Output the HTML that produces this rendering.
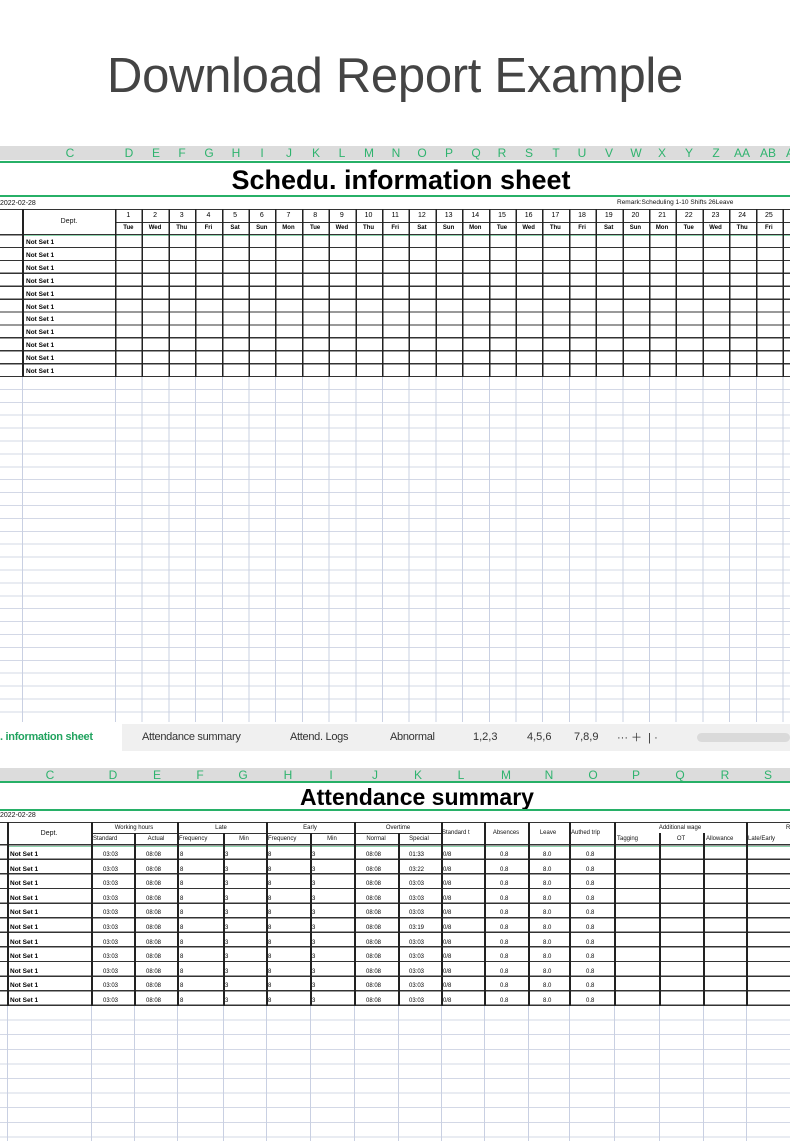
<!DOCTYPE html>
<html><head><meta charset="utf-8"><style>
*{margin:0;padding:0;box-sizing:border-box}
body{width:790px;height:1141px;background:#fff;position:relative;overflow:hidden;font-family:"Liberation Sans",sans-serif}
.a{position:absolute}
.h1{left:0;width:790px;top:48px;text-align:center;font-size:49px;color:#444;letter-spacing:-0.3px}
.colbar{background:#dcdcdc;height:14px}
.colbar span{position:absolute;top:0;font-size:12px;line-height:14px;color:#2fb36e;transform:translateX(-50%)}
.gl{height:2px;background:#27b067;left:0;width:790px}
.t{font-size:7px;line-height:1;color:#111;white-space:nowrap}
.c{transform:translateX(-50%)}
.vl{position:absolute;width:1.5px;background:#222}
.vlg{position:absolute;width:1px;background:#c9d0e2}
</style></head><body>
<div class="a h1">Download Report Example</div>

<!-- SHEET 1 -->
<div class="a colbar" style="left:0;top:146px;width:790px">
<span style="left:70px">C</span><span style="left:129px">D</span><span style="left:156px">E</span><span style="left:182px">F</span><span style="left:209px">G</span><span style="left:236px">H</span><span style="left:262px">I</span><span style="left:289px">J</span><span style="left:316px">K</span><span style="left:342px">L</span><span style="left:369px">M</span><span style="left:396px">N</span><span style="left:422px">O</span><span style="left:449px">P</span><span style="left:476px">Q</span><span style="left:502px">R</span><span style="left:529px">S</span><span style="left:556px">T</span><span style="left:582px">U</span><span style="left:609px">V</span><span style="left:636px">W</span><span style="left:662px">X</span><span style="left:689px">Y</span><span style="left:716px">Z</span><span style="left:742px">AA</span><span style="left:768px">AB</span><span style="left:790px">A</span>
</div>
<div class="a gl" style="top:161px"></div>
<div class="a" style="left:6px;width:790px;top:165px;text-align:center;font-size:27px;font-weight:bold;color:#000">Schedu. information sheet</div>
<div class="a gl" style="top:195px"></div>
<div class="a t" style="left:0;top:200px">2022-02-28</div>
<div class="a t" style="left:617px;top:200px;font-size:6.5px">Remark:Scheduling 1-10 Shifts 26Leave</div>
<div class="a" style="left:0;top:209px;width:790px;height:168px;
background:repeating-linear-gradient(to bottom,#333 0 1.3px,transparent 1.3px 12.9px);background-position:0 25px;background-size:790px 143px;background-repeat:no-repeat"></div>
<div class="a" style="left:0;top:233.5px;width:790px;height:1.5px;background:#333"></div>
<div class="a" style="left:0;top:375.5px;width:790px;height:1.5px;background:#333"></div>
<div class="a" style="left:0;top:209px;width:790px;height:1.3px;background:#333"></div>
<div class="a" style="left:115px;top:221.5px;width:675px;height:1.2px;background:#333"></div>
<div class="a" style="left:23px;top:235px;width:767px;height:1px;background:#8fd3ad"></div>
<div class="a" style="left:115px;top:209px;width:675px;height:168px;background:repeating-linear-gradient(to right,#222 0 1.5px,transparent 1.5px 26.7px)"></div>
<div class="vl" style="left:22px;top:209px;height:168px"></div>
<div class="a" style="left:0;top:377px;width:790px;height:345px;background:repeating-linear-gradient(to bottom,transparent 0 11.9px,#d3d8e6 11.9px 12.9px)"></div>
<div class="a" style="left:115px;top:377px;width:675px;height:345px;background:repeating-linear-gradient(to right,#c9d0e2 0 1px,transparent 1px 26.7px)"></div>
<div class="vlg" style="left:22px;top:377px;height:345px"></div>
<div class="a t c" style="left:69px;top:218px">Dept.</div>
<div class="a" style="left:115px;top:212px;width:675px;font-size:7px;display:flex">
<span style="width:26.7px;text-align:center;flex:none">1</span><span style="width:26.7px;text-align:center;flex:none">2</span><span style="width:26.7px;text-align:center;flex:none">3</span><span style="width:26.7px;text-align:center;flex:none">4</span><span style="width:26.7px;text-align:center;flex:none">5</span><span style="width:26.7px;text-align:center;flex:none">6</span><span style="width:26.7px;text-align:center;flex:none">7</span><span style="width:26.7px;text-align:center;flex:none">8</span><span style="width:26.7px;text-align:center;flex:none">9</span><span style="width:26.7px;text-align:center;flex:none">10</span><span style="width:26.7px;text-align:center;flex:none">11</span><span style="width:26.7px;text-align:center;flex:none">12</span><span style="width:26.7px;text-align:center;flex:none">13</span><span style="width:26.7px;text-align:center;flex:none">14</span><span style="width:26.7px;text-align:center;flex:none">15</span><span style="width:26.7px;text-align:center;flex:none">16</span><span style="width:26.7px;text-align:center;flex:none">17</span><span style="width:26.7px;text-align:center;flex:none">18</span><span style="width:26.7px;text-align:center;flex:none">19</span><span style="width:26.7px;text-align:center;flex:none">20</span><span style="width:26.7px;text-align:center;flex:none">21</span><span style="width:26.7px;text-align:center;flex:none">22</span><span style="width:26.7px;text-align:center;flex:none">23</span><span style="width:26.7px;text-align:center;flex:none">24</span><span style="width:26.7px;text-align:center;flex:none">25</span>
</div>
<div class="a" style="left:115px;top:225px;width:675px;font-size:6px;font-weight:bold;display:flex">
<span style="width:26.7px;text-align:center;flex:none">Tue</span><span style="width:26.7px;text-align:center;flex:none">Wed</span><span style="width:26.7px;text-align:center;flex:none">Thu</span><span style="width:26.7px;text-align:center;flex:none">Fri</span><span style="width:26.7px;text-align:center;flex:none">Sat</span><span style="width:26.7px;text-align:center;flex:none">Sun</span><span style="width:26.7px;text-align:center;flex:none">Mon</span><span style="width:26.7px;text-align:center;flex:none">Tue</span><span style="width:26.7px;text-align:center;flex:none">Wed</span><span style="width:26.7px;text-align:center;flex:none">Thu</span><span style="width:26.7px;text-align:center;flex:none">Fri</span><span style="width:26.7px;text-align:center;flex:none">Sat</span><span style="width:26.7px;text-align:center;flex:none">Sun</span><span style="width:26.7px;text-align:center;flex:none">Mon</span><span style="width:26.7px;text-align:center;flex:none">Tue</span><span style="width:26.7px;text-align:center;flex:none">Wed</span><span style="width:26.7px;text-align:center;flex:none">Thu</span><span style="width:26.7px;text-align:center;flex:none">Fri</span><span style="width:26.7px;text-align:center;flex:none">Sat</span><span style="width:26.7px;text-align:center;flex:none">Sun</span><span style="width:26.7px;text-align:center;flex:none">Mon</span><span style="width:26.7px;text-align:center;flex:none">Tue</span><span style="width:26.7px;text-align:center;flex:none">Wed</span><span style="width:26.7px;text-align:center;flex:none">Thu</span><span style="width:26.7px;text-align:center;flex:none">Fri</span>
</div>
<div class="a" style="left:26px;top:237px;font-size:6.5px;font-weight:bold;line-height:12.9px">Not Set 1<br>Not Set 1<br>Not Set 1<br>Not Set 1<br>Not Set 1<br>Not Set 1<br>Not Set 1<br>Not Set 1<br>Not Set 1<br>Not Set 1<br>Not Set 1</div>

<!-- tab bar -->
<div class="a" style="left:0;top:724px;width:790px;height:27px;background:#f0f0f0"></div>
<div class="a" style="left:0;top:724px;width:122px;height:27px;background:#fff"></div>
<div class="a" style="left:0;top:731px;font-size:11px;color:#21a35f;font-weight:bold;letter-spacing:-0.3px">. information sheet</div>
<div class="a" style="left:142px;top:731px;font-size:11px;color:#333;letter-spacing:-0.3px">Attendance summary</div>
<div class="a" style="left:290px;top:731px;font-size:11px;color:#333;letter-spacing:-0.3px">Attend. Logs</div>
<div class="a" style="left:390px;top:731px;font-size:11px;color:#333;letter-spacing:-0.3px">Abnormal</div>
<div class="a" style="left:473px;top:731px;font-size:11px;color:#333">1,2,3</div>
<div class="a" style="left:527px;top:731px;font-size:11px;color:#333">4,5,6</div>
<div class="a" style="left:574px;top:731px;font-size:11px;color:#333">7,8,9</div>
<div class="a" style="left:617px;top:729px;font-size:11px;color:#333">··· ＋ &nbsp;| ·</div>
<div class="a" style="left:697px;top:733px;width:93px;height:9px;border-radius:5px;background:#dadada"></div>

<!-- SHEET 2 -->
<div class="a colbar" style="left:0;top:768px;width:790px">
<span style="left:50px">C</span><span style="left:113px">D</span><span style="left:157px">E</span><span style="left:200px">F</span><span style="left:243px">G</span><span style="left:288px">H</span><span style="left:331px">I</span><span style="left:375px">J</span><span style="left:418px">K</span><span style="left:461px">L</span><span style="left:506px">M</span><span style="left:549px">N</span><span style="left:593px">O</span><span style="left:636px">P</span><span style="left:680px">Q</span><span style="left:725px">R</span><span style="left:768px">S</span>
</div>
<div class="a gl" style="top:781px"></div>
<div class="a" style="left:22px;width:790px;top:784px;text-align:center;font-size:23px;font-weight:bold;color:#000">Attendance summary</div>
<div class="a gl" style="top:809px"></div>
<div class="a t" style="left:0;top:812px">2022-02-28</div>
<div class="a" style="left:0;top:822px;width:790px;height:1.3px;background:#333"></div>
<div class="a" style="left:91px;top:832.5px;width:350px;height:1.1px;background:#333"></div>
<div class="a" style="left:0;top:844px;width:790px;height:162px;background:repeating-linear-gradient(to bottom,#333 0 1.4px,transparent 1.4px 14.6px)"></div>
<div class="a" style="left:8px;top:846px;width:782px;height:1px;background:#8fd3ad"></div>
<div class="vl" style="left:7px;top:822px;height:184px"></div>
<div class="vl" style="left:91px;top:822px;height:184px"></div>
<div class="vl" style="left:134px;top:833px;height:173px"></div>
<div class="vl" style="left:177px;top:822px;height:184px"></div>
<div class="vl" style="left:223px;top:833px;height:173px"></div>
<div class="vl" style="left:266px;top:822px;height:184px"></div>
<div class="vl" style="left:310px;top:833px;height:173px"></div>
<div class="vl" style="left:354px;top:822px;height:184px"></div>
<div class="vl" style="left:398px;top:833px;height:173px"></div>
<div class="vl" style="left:441px;top:822px;height:184px"></div>
<div class="vl" style="left:484px;top:822px;height:184px"></div>
<div class="vl" style="left:528px;top:822px;height:184px"></div>
<div class="vl" style="left:569px;top:822px;height:184px"></div>
<div class="vl" style="left:614px;top:822px;height:184px"></div>
<div class="vl" style="left:659px;top:833px;height:173px"></div>
<div class="vl" style="left:703px;top:833px;height:173px"></div>
<div class="vl" style="left:746px;top:822px;height:184px"></div>
<div class="a" style="left:0;top:1006px;width:790px;height:135px;background:repeating-linear-gradient(to bottom,transparent 0 13.6px,#d3d8e6 13.6px 14.6px)"></div>
<div class="vlg" style="left:7px;top:1006px;height:135px"></div><div class="vlg" style="left:91px;top:1006px;height:135px"></div><div class="vlg" style="left:134px;top:1006px;height:135px"></div><div class="vlg" style="left:177px;top:1006px;height:135px"></div><div class="vlg" style="left:223px;top:1006px;height:135px"></div><div class="vlg" style="left:266px;top:1006px;height:135px"></div><div class="vlg" style="left:310px;top:1006px;height:135px"></div><div class="vlg" style="left:354px;top:1006px;height:135px"></div><div class="vlg" style="left:398px;top:1006px;height:135px"></div><div class="vlg" style="left:441px;top:1006px;height:135px"></div><div class="vlg" style="left:484px;top:1006px;height:135px"></div><div class="vlg" style="left:528px;top:1006px;height:135px"></div><div class="vlg" style="left:569px;top:1006px;height:135px"></div><div class="vlg" style="left:614px;top:1006px;height:135px"></div><div class="vlg" style="left:659px;top:1006px;height:135px"></div><div class="vlg" style="left:703px;top:1006px;height:135px"></div><div class="vlg" style="left:746px;top:1006px;height:135px"></div>
<div class="a t c" style="left:49px;top:830px">Dept.</div>
<div class="a t c" style="left:134px;top:825px;font-size:6px">Working hours</div>
<div class="a t c" style="left:221px;top:825px;font-size:6px">Late</div>
<div class="a t c" style="left:310px;top:825px;font-size:6px">Early</div>
<div class="a t c" style="left:398px;top:825px;font-size:6px">Overtime</div>
<div class="a t" style="left:442px;top:830px;font-size:6px">Standard t</div>
<div class="a t c" style="left:506px;top:830px;font-size:6px">Absences</div>
<div class="a t c" style="left:548px;top:830px;font-size:6px">Leave</div>
<div class="a t" style="left:571px;top:830px;font-size:6px">Authed trip</div>
<div class="a t c" style="left:680px;top:825px;font-size:6px">Additional wage</div>
<div class="a t" style="left:786px;top:825px;font-size:6px">R</div>
<div class="a t" style="left:93px;top:836px;font-size:6px">Standard</div>
<div class="a t c" style="left:156px;top:836px;font-size:6px">Actual</div>
<div class="a t" style="left:179px;top:836px;font-size:6px">Frequency</div>
<div class="a t c" style="left:244px;top:836px;font-size:6px">Min</div>
<div class="a t" style="left:268px;top:836px;font-size:6px">Frequency</div>
<div class="a t c" style="left:332px;top:836px;font-size:6px">Min</div>
<div class="a t c" style="left:376px;top:836px;font-size:6px">Normal</div>
<div class="a t c" style="left:419px;top:836px;font-size:6px">Special</div>
<div class="a t" style="left:617px;top:836px;font-size:6px">Tagging</div>
<div class="a t c" style="left:681px;top:836px;font-size:6px">OT</div>
<div class="a t" style="left:706px;top:836px;font-size:6px">Allowance</div>
<div class="a t" style="left:748px;top:836px;font-size:6px">Late/Early</div>
<div class="a" style="left:10px;top:848px;font-size:6.5px;font-weight:bold;line-height:14.6px">Not Set 1<br>Not Set 1<br>Not Set 1<br>Not Set 1<br>Not Set 1<br>Not Set 1<br>Not Set 1<br>Not Set 1<br>Not Set 1<br>Not Set 1<br>Not Set 1</div>
<div class="a" style="left:103px;top:848px;font-size:6px;line-height:14.6px">03:03<br>03:03<br>03:03<br>03:03<br>03:03<br>03:03<br>03:03<br>03:03<br>03:03<br>03:03<br>03:03</div>
<div class="a" style="left:146px;top:848px;font-size:6px;line-height:14.6px">08:08<br>08:08<br>08:08<br>08:08<br>08:08<br>08:08<br>08:08<br>08:08<br>08:08<br>08:08<br>08:08</div>
<div class="a" style="left:180px;top:848px;font-size:6px;line-height:14.6px">8<br>8<br>8<br>8<br>8<br>8<br>8<br>8<br>8<br>8<br>8</div>
<div class="a" style="left:225px;top:848px;font-size:6px;line-height:14.6px">3<br>3<br>3<br>3<br>3<br>3<br>3<br>3<br>3<br>3<br>3</div>
<div class="a" style="left:268px;top:848px;font-size:6px;line-height:14.6px">8<br>8<br>8<br>8<br>8<br>8<br>8<br>8<br>8<br>8<br>8</div>
<div class="a" style="left:312px;top:848px;font-size:6px;line-height:14.6px">3<br>3<br>3<br>3<br>3<br>3<br>3<br>3<br>3<br>3<br>3</div>
<div class="a" style="left:366px;top:848px;font-size:6px;line-height:14.6px">08:08<br>08:08<br>08:08<br>08:08<br>08:08<br>08:08<br>08:08<br>08:08<br>08:08<br>08:08<br>08:08</div>
<div class="a" style="left:409px;top:848px;font-size:6px;line-height:14.6px">01:33<br>03:22<br>03:03<br>03:03<br>03:03<br>03:19<br>03:03<br>03:03<br>03:03<br>03:03<br>03:03</div>
<div class="a" style="left:443px;top:848px;font-size:6px;line-height:14.6px">0/8<br>0/8<br>0/8<br>0/8<br>0/8<br>0/8<br>0/8<br>0/8<br>0/8<br>0/8<br>0/8</div>
<div class="a" style="left:500px;top:848px;font-size:6px;line-height:14.6px">0.8<br>0.8<br>0.8<br>0.8<br>0.8<br>0.8<br>0.8<br>0.8<br>0.8<br>0.8<br>0.8</div>
<div class="a" style="left:543px;top:848px;font-size:6px;line-height:14.6px">8.0<br>8.0<br>8.0<br>8.0<br>8.0<br>8.0<br>8.0<br>8.0<br>8.0<br>8.0<br>8.0</div>
<div class="a" style="left:586px;top:848px;font-size:6px;line-height:14.6px">0.8<br>0.8<br>0.8<br>0.8<br>0.8<br>0.8<br>0.8<br>0.8<br>0.8<br>0.8<br>0.8</div>
</body></html>
